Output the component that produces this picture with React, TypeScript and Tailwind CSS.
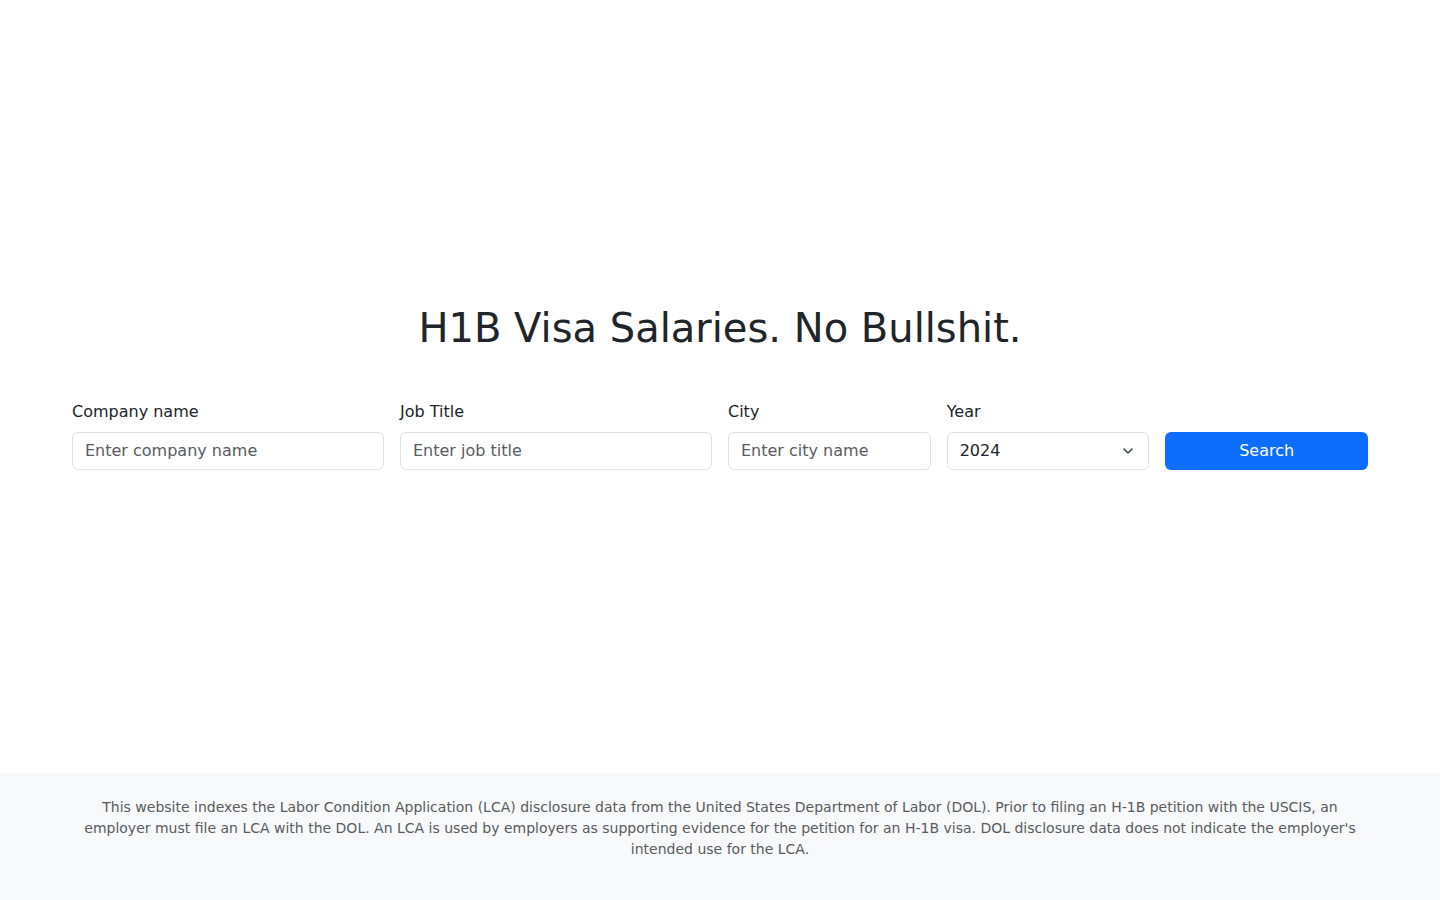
export default function App() {
  return (
    <div className="min-h-screen flex flex-col bg-white text-[#212529] font-['DejaVu_Sans',sans-serif]">
      <main className="flex-1 flex items-center">
        <div className="w-full max-w-[1320px] mx-auto px-3">
          <h1 className="text-center text-[40px] leading-[1.2] font-normal mb-12">H1B Visa Salaries. No Bullshit.</h1>
          <form className="grid grid-cols-12 gap-4 items-end" onSubmit={(e) => e.preventDefault()}>
            <div className="col-span-3">
              <label className="block text-base leading-6 mb-2">Company name</label>
              <input
                type="text"
                placeholder="Enter company name"
                className="w-full h-[38px] px-3 text-base border border-[#dee2e6] rounded-md placeholder:text-[#595c5f] outline-none"
              />
            </div>
            <div className="col-span-3">
              <label className="block text-base leading-6 mb-2">Job Title</label>
              <input
                type="text"
                placeholder="Enter job title"
                className="w-full h-[38px] px-3 text-base border border-[#dee2e6] rounded-md placeholder:text-[#595c5f] outline-none"
              />
            </div>
            <div className="col-span-2">
              <label className="block text-base leading-6 mb-2">City</label>
              <input
                type="text"
                placeholder="Enter city name"
                className="w-full h-[38px] px-3 text-base border border-[#dee2e6] rounded-md placeholder:text-[#595c5f] outline-none"
              />
            </div>
            <div className="col-span-2">
              <label className="block text-base leading-6 mb-2">Year</label>
              <div className="relative">
                <select
                  defaultValue="2024"
                  className="appearance-none w-full h-[38px] pl-3 pr-9 text-base bg-white text-[#212529] border border-[#dee2e6] rounded-md outline-none"
                >
                  <option>2024</option>
                  <option>2023</option>
                  <option>2022</option>
                  <option>2021</option>
                  <option>2020</option>
                </select>
                <svg
                  className="pointer-events-none absolute right-4 top-1/2 -translate-y-1/2 w-[10px] h-[6px]"
                  viewBox="0 0 10 6"
                  fill="none"
                  stroke="#343a40"
                  strokeWidth="1.5"
                  strokeLinecap="round"
                  strokeLinejoin="round"
                >
                  <path d="M1 1l4 4 4-4" />
                </svg>
              </div>
            </div>
            <div className="col-span-2">
              <button
                type="submit"
                className="w-full h-[38px] text-base text-white bg-[#0d6efd] rounded-md"
              >
                Search
              </button>
            </div>
          </form>
        </div>
      </main>
      <footer className="bg-[#f8f9fa] pt-6 pb-6">
        <div className="max-w-[1320px] mx-auto px-3">
          <p className="text-center text-sm leading-[21px] text-[#595c5f] mb-4">
            This website indexes the Labor Condition Application (LCA) disclosure data from the United States Department of Labor (DOL). Prior to filing an H-1B petition with the USCIS, an employer must file an LCA with the DOL. An LCA is used by employers as supporting evidence for the petition for an H-1B visa. DOL disclosure data does not indicate the employer's intended use for the LCA.
          </p>
        </div>
      </footer>
    </div>
  );
}
